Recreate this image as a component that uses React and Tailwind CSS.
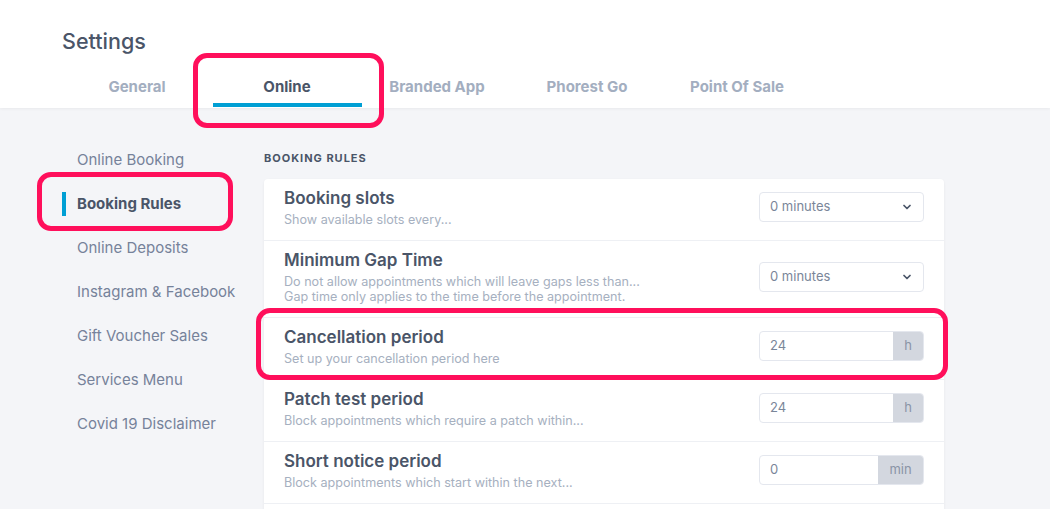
import { ChevronDown } from 'lucide-react'

const tabs = ['General', 'Online', 'Branded App', 'Phorest Go', 'Point Of Sale']
const menu = ['Online Booking', 'Booking Rules', 'Online Deposits', 'Instagram & Facebook', 'Gift Voucher Sales', 'Services Menu', 'Covid 19 Disclaimer']

function Select({ value }) {
  return (
    <div className="w-[165px] h-[30px] border border-[#e4e7ee] rounded-[4px] flex items-center justify-between pl-[10px] pr-[10px] text-[13px] text-[#7a8699] bg-white">
      <span>{value}</span>
      <ChevronDown size={12} strokeWidth={3.5} className="text-[#4a5568]" />
    </div>
  )
}

function Addon({ value, unit, wide }) {
  return (
    <div className="w-[165px] h-[30px] border border-[#e4e7ee] rounded-[4px] flex text-[13px] bg-white overflow-hidden">
      <div className="flex-1 flex items-center pl-[10px] text-[#7a8699]">{value}</div>
      <div className={(wide ? 'w-[45px]' : 'w-[30px]') + ' bg-[#d3d7df] flex items-center justify-center text-[#8a94a6]'}>{unit}</div>
    </div>
  )
}

function Row({ title, lines, control }) {
  return (
    <div className="flex items-center justify-between pl-[20px] pr-[20px] pt-[8px] pb-[13px] border-b border-[#eef0f4]">
      <div>
        <div className="text-[17px] leading-[22px] font-semibold text-[#4a5568]">{title}</div>
        <div className="mt-[3px]">
          {lines.map(l => (
            <div key={l} className="text-[12.6px] leading-[15px] text-[#a6b0c0]">{l}</div>
          ))}
        </div>
      </div>
      {control}
    </div>
  )
}

export default function App() {
  return (
    <div className="relative w-[1050px] h-[509px] overflow-hidden bg-[#f4f5f8]" style={{ fontFamily: 'Inter, "Noto Sans", sans-serif' }}>
      {/* Header */}
      <header className="bg-white shadow-[0_1px_3px_rgba(0,0,0,0.05)] pl-[62px] pb-[1px]">
        <div className="pt-[27px] text-[21.5px] leading-[28px] text-[#4a5568] font-medium">Settings</div>
        <div className="flex mt-[21px]">
          {tabs.map(t => (
            <div key={t} className="w-[150px] flex flex-col items-center">
              <div className={'text-[15px] leading-[22px] font-bold ' + (t === 'Online' ? 'text-[#4a5568]' : 'text-[#a3aec0]')}>{t}</div>
              <div className={'mt-[5px] h-[4px] w-[149px] ' + (t === 'Online' ? 'bg-[#009fd4]' : 'bg-transparent')} />
            </div>
          ))}
        </div>
      </header>

      {/* Body */}
      <div className="flex pl-[62px] pt-[30px]">
        <nav className="w-[202px] flex flex-col">
          {menu.map(m => (
            <div key={m} className="h-[44px] flex items-center relative">
              {m === 'Booking Rules' && <div className="absolute left-0 top-[10px] w-[4px] h-[24px] bg-[#009fd4]" />}
              <span className={'pl-[15px] text-[15px] ' + (m === 'Booking Rules' ? 'font-bold text-[#4a5568]' : 'text-[#76829a]')}>{m}</span>
            </div>
          ))}
        </nav>
        <div className="w-[680px] pt-[10px]">
          <div className="text-[11px] leading-[20px] font-bold text-[#4a5568] tracking-[0.09em]">BOOKING RULES</div>
          <div className="mt-[11px] bg-white rounded-[4px] shadow-[0_1px_3px_rgba(0,0,0,0.06)]">
            <Row title="Booking slots" lines={['Show available slots every...']} control={<Select value="0 minutes" />} />
            <Row title="Minimum Gap Time" lines={['Do not allow appointments which will leave gaps less than...', 'Gap time only applies to the time before the appointment.']} control={<Select value="0 minutes" />} />
            <Row title="Cancellation period" lines={['Set up your cancellation period here']} control={<Addon value="24" unit="h" />} />
            <Row title="Patch test period" lines={['Block appointments which require a patch within...']} control={<Addon value="24" unit="h" />} />
            <Row title="Short notice period" lines={['Block appointments which start within the next...']} control={<Addon value="0" unit="min" wide />} />
            <div className="h-[60px]" />
          </div>
        </div>
      </div>

      {/* Annotation highlights */}
      <div className="absolute left-[193px] top-[53px] w-[191px] h-[75px] border-[5px] border-[#ff0f5b] rounded-[14px]" />
      <div className="absolute left-[37px] top-[172px] w-[196px] h-[59px] border-[5px] border-[#ff0f5b] rounded-[14px]" />
      <div className="absolute left-[256px] top-[308px] w-[692px] h-[72px] border-[5px] border-[#ff0f5b] rounded-[14px]" />
    </div>
  )
}
